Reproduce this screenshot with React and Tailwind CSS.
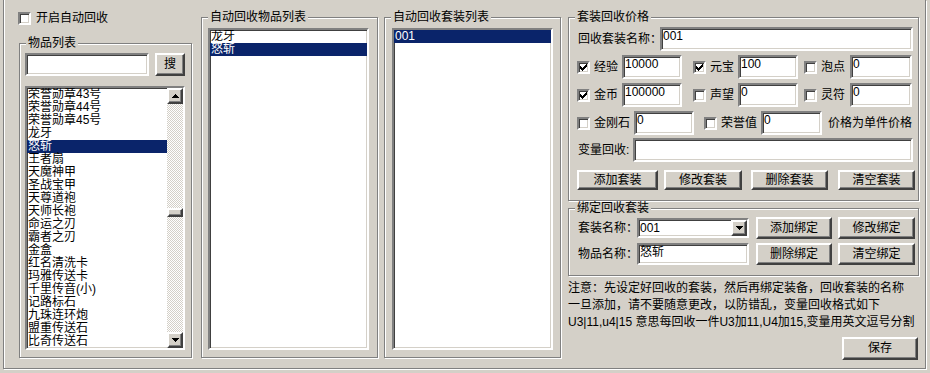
import React from 'react';

const face = "font-['Liberation_Sans','Noto_Sans_CJK_SC',sans-serif]";

// classic win32 3d borders
const sunken = 'border-2 border-t-[#808080] border-l-[#808080] border-b-white border-r-white shadow-[inset_1px_1px_0_#404040,inset_-1px_-1px_0_#d4d0c8]';
const raised = 'border-2 border-t-white border-l-white border-b-[#404040] border-r-[#404040] shadow-[inset_-1px_-1px_0_#808080]';

const CheckBox = ({ checked }) => (
    <span className={`w-[13px] h-[13px] bg-white shrink-0 flex items-center justify-center ${sunken}`}>
        {checked && (
            <svg width="7" height="7" viewBox="0 0 7 7" shapeRendering="crispEdges">
                <path d="M0 2h1v3H0zM1 3h1v3H1zM2 4h1v3H2zM3 3h1v3H3zM4 2h1v3H4zM5 1h1v3H5zM6 0h1v3H6z" fill="#000" />
            </svg>
        )}
    </span>
);

const Field = ({ value, className = '' }) => (
    <div className={`bg-white ${sunken} pl-[1px] pt-[1px] leading-[13px] whitespace-nowrap overflow-hidden shrink-0 ${className}`}>
        {value}
    </div>
);

const Btn = ({ children, className = '' }) => (
    <div className={`bg-[#d4d0c8] ${raised} flex items-center justify-center leading-[13px] whitespace-nowrap shrink-0 ${className}`}>
        {children}
    </div>
);

const Arrow = ({ down }) => (
    <div className={`w-[16px] h-[16px] bg-[#d4d0c8] ${raised} flex items-center justify-center shrink-0`}>
        <svg width="7" height="4" viewBox="0 0 7 4" shapeRendering="crispEdges">
            <path d={down ? 'M0 0h7v1H0zM1 1h5v1H1zM2 2h3v1H2zM3 3h1v1H3z' : 'M3 0h1v1H3zM2 1h3v1H2zM1 2h5v1H1zM0 3h7v1H0z'} fill="#000" />
        </svg>
    </div>
);

const Group = ({ label, className = '', children }) => (
    <div className={`relative border border-[#808080] shadow-[inset_1px_1px_0_#fff,1px_1px_0_#fff] shrink-0 ${className}`}>
        <span className="absolute left-[6px] -top-[7px] bg-[#d4d0c8] px-[2px] leading-[13px] whitespace-nowrap">{label}</span>
        {children}
    </div>
);

const Label = ({ children, className = '' }) => (
    <span className={`shrink-0 leading-[13px] pl-[1px] whitespace-nowrap ${className}`}>{children}</span>
);

const ListBox = ({ items, selected, className = '', scroll }) => (
    <div className={`bg-white ${sunken} flex overflow-hidden ${className}`}>
        <div className="flex-1 min-w-0">
            {items.map((it) => (
                <div
                    key={it}
                    className={`h-[13px] leading-[13px] pl-[1px] whitespace-nowrap ${it === selected ? 'bg-[#0a246a] text-white' : ''}`}
                >
                    {it}
                </div>
            ))}
        </div>
        {scroll && (
            <div className="w-[16px] flex flex-col shrink-0">
                <Arrow />
                <div className="flex-1 bg-[repeating-conic-gradient(#d4d0c8_0_25%,#fff_0_50%)] bg-[length:2px_2px]">
                    <div className={`mt-[104px] h-[9px] bg-[#d4d0c8] ${raised}`} />
                </div>
                <Arrow down />
            </div>
        )}
    </div>
);

const Opt = ({ label, checked, textW }) => (
    <div className="flex items-center shrink-0">
        <CheckBox checked={checked} />
        <span className={`ml-[4px] leading-[13px] whitespace-nowrap ${textW}`}>{label}</span>
    </div>
);

const items = [
    '荣誉勋章43号', '荣誉勋章44号', '荣誉勋章45号', '龙牙', '怒斩', '王者扇', '天魔神甲', '圣战宝甲',
    '天尊道袍', '天师长袍', '命运之刃', '霸者之刃', '金盒', '红名清洗卡', '玛雅传送卡', '千里传音(小)',
    '记路标石', '九珠连环炮', '盟重传送石', '比奇传送石',
];

export default function App() {
    return (
        <div className={`w-[930px] h-[373px] bg-[#d4d0c8] text-[12px] text-black pl-[3px] overflow-hidden ${face}`}>
            <div className="w-[923px] h-[369px] border-l border-r border-b border-[#808080] shadow-[inset_1px_0_0_#fff,1px_1px_0_#fff] flex">
                {/* 左侧 物品列表 */}
                <div className="ml-[15px] w-[173px] flex flex-col shrink-0">
                    <div className="mt-[12px] -ml-[1px] flex items-center h-[13px]">
                        <CheckBox />
                        <span className="ml-[5px] leading-[13px]">开启自动回收</span>
                    </div>
                    <Group label="物品列表" className="mt-[18px] h-[315px] pt-[9px] pl-[5px]">
                        <div className="flex">
                            <Field className="w-[124px] h-[23px]" />
                            <Btn className="ml-[6px] w-[30px] h-[23px]">搜</Btn>
                        </div>
                        <ListBox items={items} selected="怒斩" scroll className="mt-[10px] w-[160px] h-[264px]" />
                    </Group>
                </div>

                {/* 自动回收物品列表 */}
                <Group label="自动回收物品列表" className="ml-[9px] mt-[17px] w-[177px] h-[341px] pt-[10px] pl-[6px]">
                    <ListBox items={['龙牙', '怒斩']} selected="怒斩" className="w-[161px] h-[322px]" />
                </Group>

                {/* 自动回收套装列表 */}
                <Group label="自动回收套装列表" className="ml-[6px] mt-[17px] w-[177px] h-[341px] pt-[10px] pl-[7px]">
                    <ListBox items={['001']} selected="001" className="w-[161px] h-[322px]" />
                </Group>

                {/* 右侧 */}
                <div className="ml-[7px] w-[351px] flex flex-col shrink-0">
                    <Group label="套装回收价格" className="mt-[17px] h-[184px] pt-[9px] pl-[8px]">
                        <div className="flex items-center h-[24px]">
                            <Label className="w-[83px]">回收套装名称：</Label>
                            <Field value="001" className="w-[253px] h-[24px]" />
                        </div>
                        <div className="flex items-center h-[24px] mt-[4px]">
                            <Opt label="经验" checked textW="w-[28px]" />
                            <Field value="10000" className="w-[60px] h-[24px]" />
                            <div className="ml-[11px]"><Opt label="元宝" checked textW="w-[28px]" /></div>
                            <Field value="100" className="w-[60px] h-[24px]" />
                            <div className="ml-[6px]"><Opt label="泡点" textW="w-[29px]" /></div>
                            <Field value="0" className="w-[62px] h-[24px]" />
                        </div>
                        <div className="flex items-center h-[24px] mt-[4px]">
                            <Opt label="金币" checked textW="w-[28px]" />
                            <Field value="100000" className="w-[60px] h-[24px]" />
                            <div className="ml-[11px]"><Opt label="声望" textW="w-[28px]" /></div>
                            <Field value="0" className="w-[60px] h-[24px]" />
                            <div className="ml-[6px]"><Opt label="灵符" textW="w-[29px]" /></div>
                            <Field value="0" className="w-[62px] h-[24px]" />
                        </div>
                        <div className="flex items-center h-[24px] mt-[4px]">
                            <Opt label="金刚石" textW="w-[40px]" />
                            <Field value="0" className="w-[60px] h-[24px]" />
                            <div className="ml-[10px]"><Opt label="荣誉值" textW="w-[40px]" /></div>
                            <Field value="0" className="w-[61px] h-[24px]" />
                            <span className="ml-[6px] leading-[13px] whitespace-nowrap">价格为单件价格</span>
                        </div>
                        <div className="flex items-center h-[24px] mt-[3px]">
                            <Label className="w-[56px]">变量回收:</Label>
                            <Field className="w-[280px] h-[24px]" />
                        </div>
                        <div className="flex mt-[8px]">
                            <Btn className="w-[81px] h-[20px]">添加套装</Btn>
                            <Btn className="ml-[6px] w-[78px] h-[20px]">修改套装</Btn>
                            <Btn className="ml-[9px] w-[77px] h-[20px]">删除套装</Btn>
                            <Btn className="ml-[10px] w-[77px] h-[20px]">清空套装</Btn>
                        </div>
                    </Group>

                    <Group label="绑定回收套装" className="mt-[7px] h-[68px] pt-[8px] pl-[8px]">
                        <div className="flex items-center h-[22px]">
                            <Label className="w-[60px]">套装名称：</Label>
                            <div className={`w-[112px] h-[20px] shrink-0 bg-white ${sunken} flex items-center`}>
                                <span className="flex-1 pl-[1px] leading-[13px]">001</span>
                                <Arrow down />
                            </div>
                            <Btn className="ml-[7px] w-[76px] h-[22px]">添加绑定</Btn>
                            <Btn className="ml-[6px] w-[77px] h-[22px]">修改绑定</Btn>
                        </div>
                        <div className="flex items-center h-[22px] mt-[4px]">
                            <Label className="w-[60px]">物品名称：</Label>
                            <Field value="怒斩" className="w-[112px] h-[22px]" />
                            <Btn className="ml-[7px] w-[76px] h-[22px]">删除绑定</Btn>
                            <Btn className="ml-[6px] w-[77px] h-[22px]">清空绑定</Btn>
                        </div>
                    </Group>

                    <div className="mt-[4px] leading-[17px] whitespace-nowrap">
                        <div>注意：先设定好回收的套装，然后再绑定装备，回收套装的名称</div>
                        <div>一旦添加，请不要随意更改，以防错乱，变量回收格式如下</div>
                        <div>U3|11,u4|15 意思每回收一件U3加11,U4加15,变量用英文逗号分割</div>
                    </div>

                    <div className="flex justify-end mt-[6px] pr-[1px]">
                        <Btn className="w-[76px] h-[23px]">保存</Btn>
                    </div>
                </div>
            </div>
        </div>
    );
}
